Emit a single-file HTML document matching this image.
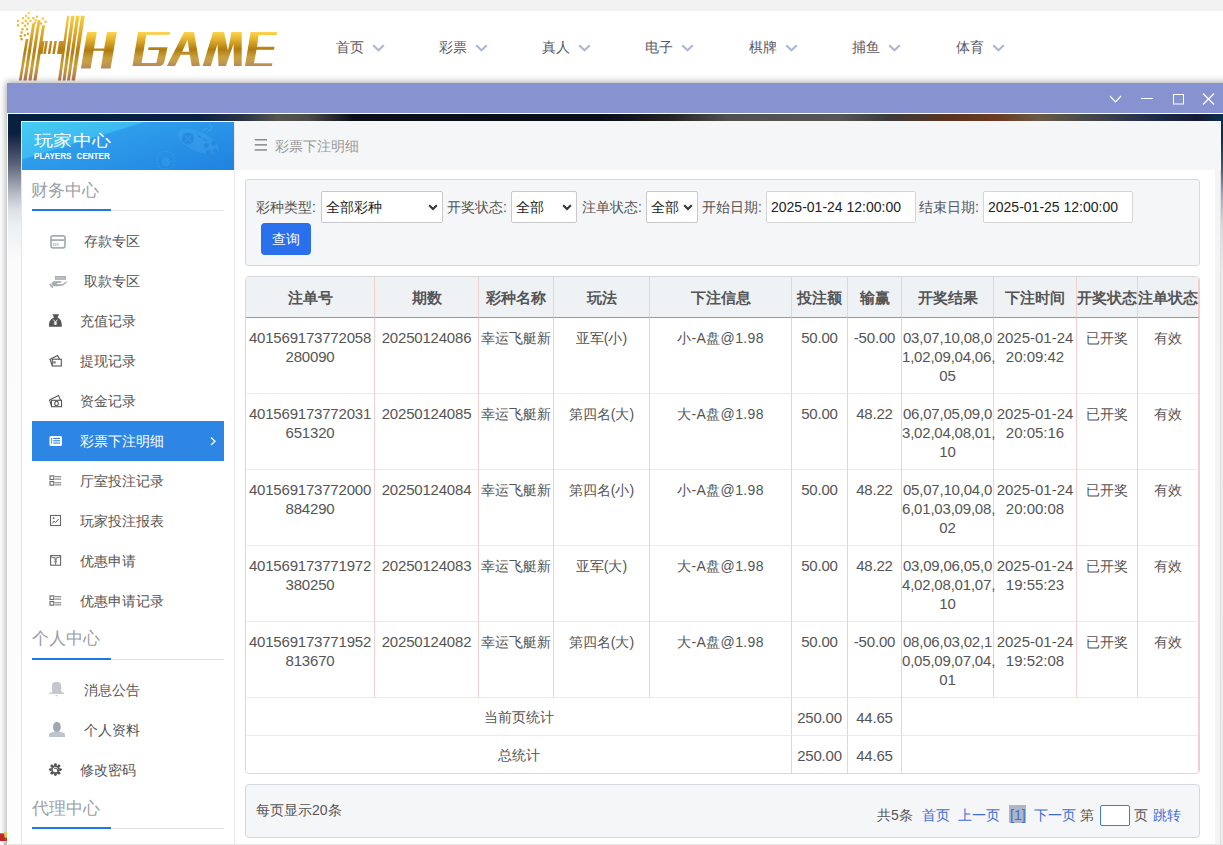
<!DOCTYPE html>
<html><head><meta charset="utf-8">
<style>
*{box-sizing:border-box;margin:0;padding:0}
html,body{width:1223px;height:845px;overflow:hidden;background:#fff;font-family:"Liberation Sans",sans-serif;font-size:14px;color:#555}
.abs{position:absolute}
#topstrip{left:0;top:0;width:1223px;height:11px;background:#f2f2f2}
#logo{left:14px;top:10px}
.nav{top:38px;font-size:14px;color:#5a5a66;height:18px;line-height:18px;white-space:nowrap}
.nav svg{position:absolute;top:6px}
#shadow{left:7px;top:83px;width:1230px;height:800px;box-shadow:0 0 7px 1px rgba(0,0,0,.35)}
#titlebar{left:7px;top:83px;width:1216px;height:30px;background:#8792d0}
#tbline{left:7px;top:113px;width:1216px;height:1px;background:#fff}
#dlgbg{left:7px;top:114px;width:1216px;height:731px;background:#f7f7f8;border-left:1px solid #fff}
#bgtop{left:8px;top:114px;width:1215px;height:8px;background:linear-gradient(90deg,#03203f 0,#0a2242 190px,#2a3345 235px,#55554f 270px,#4a4a48 300px,#0a0f18 345px,#070c16 590px,#222 660px,#505050 720px,#565656 830px,#3b3b3b 880px,#5a3420 940px,#6a3c22 990px,#6a5a45 1030px,#4a4a4a 1075px,#1e2a48 1150px,#161a34 1190px,#0a3050 1215px)}
#bgleft{left:8px;top:114px;width:13px;height:731px;background:linear-gradient(180deg,#06203f 0,#0c2042 20px,#2a3552 30px,#5a6278 50px,#8a90a0 65px,#b8bcc6 80px,#dcdfe4 95px,#eceef2 110px,#f4f5f7 130px,#fbfbfb 145px,#fdfdfd 731px)}
#bgright{left:1221px;top:114px;width:2px;height:731px;background:linear-gradient(180deg,#063050 0,#0e2d50 25px,#4a5a70 55px,#a0a4b0 80px,#d8d8dc 110px,#ececec 160px,#eeeeee 731px)}
#sidebar{left:21px;top:121px;width:214px;height:724px;background:#fff;border-left:1px solid #e6e6e6;border-right:1px solid #e6e8ec}
#sbhead{left:22px;top:122px;width:212px;height:48px;background:linear-gradient(163deg,#46cdf3 0%,#3cb9f0 32.5%,#2f9deb 34%,#2993e7 60%,#1f82e0 100%)}
.sectitle{left:32px;font-size:17px;color:#9aa0a6;white-space:nowrap;line-height:20px}
.secline{left:32px;width:192px;height:1px;background:#e2e4e8}
.secblue{left:32px;width:79px;height:2px;background:#1f7ae0}
.item{left:32px;width:192px;height:40px;line-height:40px;white-space:nowrap;color:#555;font-size:14px}
.item .ic{position:absolute;left:17px;top:0}
.item .tx{position:absolute;left:48px;top:0}
.item.active{background:#2d86e3;color:#fff}
#content{left:235px;top:121px;width:986px;height:724px;background:#fff}
#crumb{left:235px;top:121px;width:986px;height:49px;background:#f5f6f8}
#scroll{left:1215px;top:170px;width:6px;height:675px;background:#f4f4f4;border-right:1px solid #dedede}
#filter{left:245px;top:179px;width:955px;height:87px;background:#f5f6f8;border:1px solid #d6dadf;border-radius:3px}
.lbl{top:199px;font-size:14px;color:#555;white-space:nowrap;line-height:16px}
.sel{top:191px;height:32px;background:#fff;border:1px solid #c9c9c9;border-radius:2px;font-size:14px;color:#222;line-height:30px;padding-left:4px;white-space:nowrap}
.sel svg{position:absolute;right:4px;top:12px}
.inp{top:191px;width:150px;height:32px;background:#fff;border:1px solid #d5d5d5;border-radius:2px;font-size:14px;color:#222;line-height:30px;padding-left:4px;white-space:nowrap}
#btn{left:261px;top:223px;width:50px;height:32px;background:#2a70ec;border-radius:4px;color:#fff;text-align:center;line-height:32px;font-size:14px}
#tablebox{left:245px;top:276px;width:955px;height:498px;border:1px solid #d6dadf;border-radius:4px;overflow:hidden;background:#fff}
table{border-collapse:separate;border-spacing:0;table-layout:fixed;width:953px;position:absolute;left:0;top:0}
th{height:41px;background:#eff2f5;font-weight:bold;color:#555;font-size:15px;border-right:1px solid #f3d0d0;border-bottom:1px solid #9e9595;white-space:nowrap;overflow:visible;padding:2px 0 0 0}
td{height:76px;vertical-align:top;text-align:center;color:#555;font-size:14px;line-height:19px;border-right:1px solid #f3d0d0;border-bottom:1px solid #ebebeb;padding:11px 0 0 0;white-space:nowrap}
td.n{font-size:15px;letter-spacing:-.2px;padding-top:10px}
td.d{letter-spacing:0}
td.bi{letter-spacing:.35px}
tr.sum td{height:38px;vertical-align:middle;padding:2px 0 0 0}
tr.last td{height:37px;border-bottom:none}

#pager{left:245px;top:784px;width:955px;height:54px;background:#f5f6f8;border:1px solid #d3d8de;border-radius:4px}
.pg{top:806px;font-size:14px;white-space:nowrap;line-height:18px;color:#555}
.pg.b{color:#3b6fd6}
</style></head><body>
<div id="topstrip" class="abs"></div>
<!-- LOGO -->
<svg id="logo" class="abs" style="left:0;top:0" width="290" height="90" viewBox="0 0 290 90">
<defs>
<linearGradient id="g1" x1="0" y1="14" x2="0" y2="81" gradientUnits="userSpaceOnUse">
<stop offset="0" stop-color="#fbd449"/><stop offset=".3" stop-color="#dba72a"/><stop offset=".55" stop-color="#b37e12"/><stop offset=".78" stop-color="#c8a23c"/><stop offset="1" stop-color="#b27452"/>
</linearGradient>
<linearGradient id="g2" x1="0" y1="32" x2="0" y2="67" gradientUnits="userSpaceOnUse">
<stop offset="0" stop-color="#fdd54c"/><stop offset=".2" stop-color="#e6b432"/><stop offset=".5" stop-color="#b07c10"/><stop offset=".72" stop-color="#c7a13e"/><stop offset=".84" stop-color="#c39c4c"/><stop offset="1" stop-color="#b8825c"/>
</linearGradient>
<linearGradient id="g3" x1="0" y1="32" x2="0" y2="69" gradientUnits="userSpaceOnUse">
<stop offset="0" stop-color="#fdd54c"/><stop offset=".2" stop-color="#e6b432"/><stop offset=".5" stop-color="#b07c10"/><stop offset=".72" stop-color="#c7a13e"/><stop offset=".84" stop-color="#c39c4c"/><stop offset="1" stop-color="#b8825c"/>
</linearGradient>
</defs>
<g fill="url(#g1)">
<polygon points="18.9,80.6 21.6,80.6 28.4,39 25.7,39"/>
<polygon points="23.4,80.6 26.6,80.6 35.1,23.5 32.2,23.5"/>
<polygon points="28.4,80.6 31.5,80.6 40.5,19.9 37.6,19.9"/>
<polygon points="33.3,80.6 36.5,80.6 45,25.3 42.1,25.3"/>
<polygon points="58,80.6 61,80.6 69.3,15.8 67.1,15.8"/>
<polygon points="62.6,80.6 65.5,80.6 74.6,15.8 71.1,15.8"/>
<polygon points="67,80.6 69.9,80.6 79.5,15.8 76,15.8"/>
<polygon points="71.5,80.6 75,80.6 84.8,15.8 80.9,15.8"/>
<polygon points="38.2,54 42.5,54 44.6,41 40.3,41"/>
<polygon points="43.3,54 45.8,54 47.9,41 45.4,41"/>
<polygon points="47.8,54 50.3,54 52.4,41 49.9,41"/>
<polygon points="52.3,54 54.8,54 56.9,41 54.4,41"/>
<polygon points="57,54 62.5,54 64.6,41 59.1,41"/>
<g transform="translate(-1.1,-1.1)">
<rect x="28.8" y="13.1" width="2.2" height="2.2"/><rect x="26.1" y="15.8" width="2.2" height="2.2"/><rect x="23" y="18.1" width="2.2" height="2.2"/><rect x="28.4" y="18.1" width="2.2" height="2.2"/><rect x="33.3" y="18.1" width="2.2" height="2.2"/><rect x="36.9" y="16.7" width="2.2" height="2.2"/><rect x="42.8" y="18.5" width="2.2" height="2.2"/><rect x="18" y="20.8" width="2.2" height="2.2"/><rect x="25.7" y="20.8" width="2.2" height="2.2"/><rect x="30.6" y="20.8" width="2.2" height="2.2"/><rect x="35.6" y="20.3" width="2.2" height="2.2"/><rect x="45.5" y="21.7" width="2.2" height="2.2"/><rect x="22.5" y="23" width="2.2" height="2.2"/><rect x="27.9" y="23.5" width="2.2" height="2.2"/><rect x="34.7" y="23" width="2.2" height="2.2"/><rect x="41" y="23.5" width="2.2" height="2.2"/><rect x="18" y="25.3" width="2.2" height="2.2"/><rect x="25.2" y="25.7" width="2.2" height="2.2"/><rect x="22.5" y="29.3" width="2.2" height="2.2"/><rect x="27" y="29.3" width="2.2" height="2.2"/><rect x="21.6" y="32.5" width="2.2" height="2.2"/><rect x="27.9" y="33.8" width="2.2" height="2.2"/><rect x="24.8" y="35.2" width="2.2" height="2.2"/><rect x="20.7" y="36.1" width="2.2" height="2.2"/><rect x="21.6" y="39.2" width="2.2" height="2.2"/>
</g>
</g>
<g fill="url(#g3)">
<polygon points="80.9,68.6 90.6,68.6 96.8,32 87.1,32"/>
<polygon points="100.8,68.6 110.6,68.6 116.8,32 107,32"/>
<polygon points="87,50.8 104.5,50.8 104.9,48.6 87.4,48.6"/>
</g>
<g fill="url(#g2)">
<path d="M132.5,66 L159,66 Q163.5,66 164.6,61 L167.5,47.2 L148.6,47.2 L148.1,49.9 L159.2,49.9 L156.4,63 L141.6,63 L146.3,34.8 L169.6,34.8 L170.1,31.9 L138.1,31.9 Z"/>
<path d="M166.9,66 L184.2,32 L194,32 L199.9,66 L191.7,66 L189.8,54.8 L180.7,54.8 L175,66 Z M182.2,51.8 L187.5,39.7 L189.3,51.8 Z" fill-rule="evenodd"/>
<polygon points="202.7,66 210.8,66 217.5,44 218.5,66 225.9,66 233.5,44 234,66 241.7,66 241.7,32 231.4,32 228,50.7 224,32 213,32"/>
<polygon points="245,66 271.9,66 272.4,63.2 254,63.2 256.5,49.7 274,49.7 274.5,46.7 257,46.7 258.6,34.9 276.6,34.9 277.1,32 250.6,32"/>
</g>
</svg>
<!-- NAV -->
<div class="abs nav" style="left:336px">首页<svg width="13" height="8" style="left:36px" viewBox="0 0 13 8"><path d="M1.2 1.2 L6.5 6.3 L11.8 1.2" fill="none" stroke="#adb5d6" stroke-width="2"/></svg></div>
<div class="abs nav" style="left:439px">彩票<svg width="13" height="8" style="left:36px" viewBox="0 0 13 8"><path d="M1.2 1.2 L6.5 6.3 L11.8 1.2" fill="none" stroke="#adb5d6" stroke-width="2"/></svg></div>
<div class="abs nav" style="left:542px">真人<svg width="13" height="8" style="left:36px" viewBox="0 0 13 8"><path d="M1.2 1.2 L6.5 6.3 L11.8 1.2" fill="none" stroke="#adb5d6" stroke-width="2"/></svg></div>
<div class="abs nav" style="left:645px">电子<svg width="13" height="8" style="left:36px" viewBox="0 0 13 8"><path d="M1.2 1.2 L6.5 6.3 L11.8 1.2" fill="none" stroke="#adb5d6" stroke-width="2"/></svg></div>
<div class="abs nav" style="left:749px">棋牌<svg width="13" height="8" style="left:36px" viewBox="0 0 13 8"><path d="M1.2 1.2 L6.5 6.3 L11.8 1.2" fill="none" stroke="#adb5d6" stroke-width="2"/></svg></div>
<div class="abs nav" style="left:852px">捕鱼<svg width="13" height="8" style="left:36px" viewBox="0 0 13 8"><path d="M1.2 1.2 L6.5 6.3 L11.8 1.2" fill="none" stroke="#adb5d6" stroke-width="2"/></svg></div>
<div class="abs nav" style="left:956px">体育<svg width="13" height="8" style="left:36px" viewBox="0 0 13 8"><path d="M1.2 1.2 L6.5 6.3 L11.8 1.2" fill="none" stroke="#adb5d6" stroke-width="2"/></svg></div>
<!-- DIALOG -->
<div id="shadow" class="abs"></div>
<div id="titlebar" class="abs"></div>
<svg class="abs" style="left:1100px;top:85px" width="123" height="28" viewBox="0 0 123 28">
<g fill="none" stroke="#fff" stroke-width="1.2">
<path d="M10 11 L15.5 16.8 L21 11"/>
<path d="M41 13.5 H53" stroke-width="1"/>
<rect x="73.5" y="9.5" width="10" height="9.5" stroke-width="1"/>
<path d="M103 8.5 L114 19.5 M114 8.5 L103 19.5"/>
</g></svg>
<div id="tbline" class="abs"></div>
<div id="dlgbg" class="abs"></div>
<div id="bgtop" class="abs"></div>
<div id="bgleft" class="abs"></div>
<div id="bgright" class="abs"></div>
<!-- SIDEBAR -->
<div id="sidebar" class="abs"></div>
<div id="sbhead" class="abs"></div>
<div class="abs" style="left:33.5px;top:128px;font-size:19px;color:#fff;line-height:22px;white-space:nowrap;transform:scale(1.02,.86);transform-origin:0 100%">玩家中心</div>
<div class="abs" style="left:33.5px;top:151px;font-size:9.4px;font-weight:bold;color:#fff;line-height:10px;white-space:nowrap;letter-spacing:0;word-spacing:3.5px;transform:scaleX(.86);transform-origin:0 0">PLAYERS CENTER</div>
<svg class="abs" style="left:150px;top:122px" width="84" height="48" viewBox="0 0 84 48">
<ellipse cx="48.4" cy="19.6" rx="22" ry="9.8" transform="rotate(25 48.4 19.6)" fill="#5ab4f0" opacity=".22"/>
<circle cx="38" cy="16.5" r="6" fill="#1c7cdc" opacity=".55"/>
<path d="M35 13.5 L41 19.5 M41 13.5 L35 19.5" stroke="#3d9ae8" stroke-width="1.6" opacity=".6"/>
<g fill="#1c7cdc" opacity=".5"><circle cx="56.5" cy="23.5" r="2.4"/><circle cx="63.5" cy="21.5" r="2.4"/><circle cx="58.5" cy="30.5" r="2.4"/><circle cx="65" cy="29" r="2.4"/></g>
<path d="M48 14 L51 15.5 M53 17 L57 19" stroke="#1c7cdc" stroke-width="1.8" opacity=".5"/>
<path d="M53 9 L56 6 L60 9 L62 5 L59 2" fill="none" stroke="#5ab4f0" stroke-width="1" opacity=".45"/>
<circle cx="16" cy="38.5" r="9" fill="none" stroke="#4aaaf0" stroke-width="1.2" stroke-dasharray="2 1.5" opacity=".35"/>
<circle cx="16" cy="40" r="4.5" fill="#4aaaf0" opacity=".25"/>
</svg>
<!-- SIDEBAR TITLES -->
<div class="abs sectitle" style="top:181px;left:31px">财务中心</div>
<div class="abs secline" style="top:210px"></div>
<div class="abs secblue" style="top:209px"></div>
<div class="abs sectitle" style="top:629px">个人中心</div>
<div class="abs secline" style="top:659px"></div>
<div class="abs secblue" style="top:658px"></div>
<div class="abs sectitle" style="top:799px">代理中心</div>
<div class="abs secline" style="top:828px"></div>
<div class="abs secblue" style="top:827px"></div>
<!-- SIDEBAR ITEMS -->
<div class="abs item" style="top:221px"><span class="tx" style="left:52px">存款专区</span></div>
<div class="abs item" style="top:261px"><span class="tx" style="left:52px">取款专区</span></div>
<div class="abs item" style="top:301px"><span class="tx">充值记录</span></div>
<div class="abs item" style="top:341px"><span class="tx">提现记录</span></div>
<div class="abs item" style="top:381px"><span class="tx">资金记录</span></div>
<div class="abs item active" style="top:421px"><span class="tx">彩票下注明细</span></div>
<div class="abs item" style="top:461px"><span class="tx">厅室投注记录</span></div>
<div class="abs item" style="top:501px"><span class="tx">玩家投注报表</span></div>
<div class="abs item" style="top:541px"><span class="tx">优惠申请</span></div>
<div class="abs item" style="top:581px"><span class="tx">优惠申请记录</span></div>
<div class="abs item" style="top:670px"><span class="tx" style="left:52px">消息公告</span></div>
<div class="abs item" style="top:710px"><span class="tx" style="left:52px">个人资料</span></div>
<div class="abs item" style="top:750px"><span class="tx">修改密码</span></div>
<svg class="abs" style="left:0;top:0" width="240" height="845" viewBox="0 0 240 845">
<!-- card -->
<g fill="none" stroke="#a4aeb6" stroke-width="1.7"><rect x="51" y="235.8" width="14" height="12" rx="2"/></g>
<rect x="51" y="239.2" width="14" height="1.8" fill="#a4aeb6"/>
<g fill="#a4aeb6"><rect x="53.4" y="243" width=".9" height="3"/><rect x="55.4" y="243" width=".9" height="3"/><rect x="57.4" y="243" width=".9" height="3"/></g>
<!-- hand -->
<rect x="55.5" y="276.4" width="10" height="2.9" fill="#bac2c8" stroke="#9ea8b0" stroke-width=".9"/>
<path d="M49.6 284.6 L50.6 284 L53 287 L52 287.7 Z" fill="#a4aeb6" stroke="#a4aeb6" stroke-width=".8"/>
<path d="M51.3 283.4 L53.4 281.3 L61.6 281.1 L61 282.6 L57 283.3 L57.3 284.3 L62.6 284 L66.4 281.2 L67 282.3 L63.2 285.6 L58 286.2 L54 286.3 L52.6 285.8 Z" fill="#a4aeb6"/>
<!-- money bag -->
<path d="M52.5 314.2 L59 314.2 L57.6 317.4 C61 319 62 322 61.8 326.7 L49 326.7 C48.8 322 50 319 54 317.4 Z" fill="#555"/>
<path d="M53.4 319.6 L55.4 322.2 L57.4 319.6 M55.4 322 V325 M53.8 322.8 H57 M53.8 324 H57" fill="none" stroke="#fff" stroke-width=".9"/>
<!-- wallet -->
<g fill="none" stroke="#555" stroke-width="1.1">
<rect x="52.3" y="359.2" width="9" height="6.8"/>
<path d="M49.6 359.4 L57.6 355.4 L59.6 359.2"/>
<path d="M50 359.4 L52.3 365.5"/>
</g>
<rect x="53.3" y="361.3" width="2.4" height="2.2" fill="#777"/>
<!-- cash -->
<g fill="none" stroke="#555" stroke-width="1.1">
<rect x="51.5" y="400.3" width="10" height="6.4"/>
<path d="M49.5 400 L58.5 395.4 L60.6 400.2"/>
<path d="M49.6 400 L51.5 406"/>
<ellipse cx="56.5" cy="403.5" rx="1.8" ry="2.2"/>
</g>
<!-- active list icon -->
<rect x="49.5" y="436" width="12.5" height="10" rx="1.6" fill="#fff"/>
<g fill="#2d86e3"><rect x="53.2" y="437.9" width="6.8" height="1.1"/><rect x="53.2" y="440.2" width="6.8" height="1.1"/><rect x="53.2" y="442.5" width="6.8" height="1.1"/><rect x="51.2" y="437.9" width=".9" height="5.7"/></g>
<path d="M211 437.5 L215 441.2 L211 445" fill="none" stroke="#fff" stroke-width="1.3"/>
<!-- list icons -->
<g fill="none" stroke="#666" stroke-width="1.1">
<rect x="50" y="475.9" width="3.8" height="3.6"/><rect x="50" y="481.6" width="3.8" height="3.6"/>
<rect x="50" y="595.9" width="3.8" height="3.6"/><rect x="50" y="601.6" width="3.8" height="3.6"/>
</g>
<g fill="#777">
<rect x="55" y="476.2" width="6.2" height="1"/><rect x="55" y="478.6" width="6.2" height="1"/><rect x="55" y="482.3" width="6.2" height="1"/><rect x="55" y="484.4" width="6.2" height="1"/>
<rect x="55" y="596.2" width="6.2" height="1"/><rect x="55" y="598.6" width="6.2" height="1"/><rect x="55" y="602.3" width="6.2" height="1"/><rect x="55" y="604.4" width="6.2" height="1"/>
</g>
<!-- chart -->
<rect x="50.5" y="515.5" width="10" height="10" fill="none" stroke="#666" stroke-width="1.1"/>
<path d="M52.4 523.5 L54 521 L55.6 522.5 L58.6 519" fill="none" stroke="#666" stroke-width="1"/>
<circle cx="53.6" cy="518.2" r=".9" fill="#666"/>
<!-- gift -->
<rect x="50.6" y="555.6" width="10" height="9.6" fill="none" stroke="#666" stroke-width="1.1"/>
<path d="M50.8 556.5 C53 558.5 58 558.5 60.4 556.5" fill="none" stroke="#666" stroke-width="1"/>
<path d="M54.2 559.2 H57 M55.6 559.2 V564.8" fill="none" stroke="#777" stroke-width="1"/>
<ellipse cx="55.6" cy="561.5" rx="1.3" ry="1.8" fill="#888"/>
<!-- bell -->
<path d="M52 693.8 V685.5 C52 683 54 681.8 56.6 681.8 C59.2 681.8 61.2 683 61.2 685.5 V691.6 L64 693.8 Z" fill="#c2c8ce"/>
<rect x="49.2" y="692.5" width="14.8" height="1.3" fill="#c2c8ce"/>
<rect x="55.6" y="695" width="2" height="1.2" fill="#c2c8ce"/>
<!-- person -->
<ellipse cx="56.9" cy="727" rx="3.9" ry="5.2" fill="#9ea8b2"/>
<path d="M49 737 V734.5 C49 733.2 51 732.2 54 731.8 L60 731.8 C63 732.2 65 733.2 65 734.5 V737 Z" fill="#bcc4cc"/>
<!-- gear -->
<g transform="translate(55.4,769.6)">
<g fill="#555"><circle cx="0.00" cy="-5.00" r="1.45"/><circle cx="3.54" cy="-3.54" r="1.45"/><circle cx="5.00" cy="-0.00" r="1.45"/><circle cx="3.54" cy="3.54" r="1.45"/><circle cx="0.00" cy="5.00" r="1.45"/><circle cx="-3.54" cy="3.54" r="1.45"/><circle cx="-5.00" cy="0.00" r="1.45"/><circle cx="-3.54" cy="-3.54" r="1.45"/></g>
<circle r="3.5" fill="none" stroke="#555" stroke-width="1.6"/>
<path d="M-1.2 -0.6 A1.6 1.6 0 1 1 1.8 1.8" fill="none" stroke="#666" stroke-width="1.1"/>
</g>
</svg>
<!-- CONTENT -->
<div id="content" class="abs"></div><div id="crumb" class="abs"></div><div id="scroll" class="abs"></div>
<svg class="abs" style="left:254px;top:138px" width="14" height="14" viewBox="0 0 14 14"><g fill="#8a8a8a"><rect x=".7" y="1" width="12.3" height="1.5"/><rect x=".7" y="6.1" width="12.3" height="1.5"/><rect x=".7" y="11.2" width="12.3" height="1.5"/></g></svg>
<div class="abs" style="left:275px;top:137px;font-size:14px;color:#999;line-height:18px;white-space:nowrap">彩票下注明细</div>
<div id="filter" class="abs"></div>
<div class="abs lbl" style="left:256px">彩种类型:</div>
<div class="abs sel" style="left:321px;width:122px">全部彩种<svg width="10" height="7" viewBox="0 0 10 7"><path d="M1.2 1.2 L5 5 L8.8 1.2" fill="none" stroke="#333" stroke-width="2"/></svg></div>
<div class="abs lbl" style="left:447px">开奖状态:</div>
<div class="abs sel" style="left:511px;width:66px">全部<svg width="10" height="7" viewBox="0 0 10 7"><path d="M1.2 1.2 L5 5 L8.8 1.2" fill="none" stroke="#333" stroke-width="2"/></svg></div>
<div class="abs lbl" style="left:582px">注单状态:</div>
<div class="abs sel" style="left:646px;width:52px">全部<svg width="10" height="7" viewBox="0 0 10 7"><path d="M1.2 1.2 L5 5 L8.8 1.2" fill="none" stroke="#333" stroke-width="2"/></svg></div>
<div class="abs lbl" style="left:702px">开始日期:</div>
<div class="abs inp" style="left:766px">2025-01-24 12:00:00</div>
<div class="abs lbl" style="left:919px">结束日期:</div>
<div class="abs inp" style="left:983px">2025-01-25 12:00:00</div>
<div id="btn" class="abs">查询</div>
<div id="tablebox" class="abs"><table><colgroup><col style="width:129px"><col style="width:104px"><col style="width:75px"><col style="width:96px"><col style="width:142px"><col style="width:56px"><col style="width:54px"><col style="width:92px"><col style="width:83px"><col style="width:61px"><col style="width:61px"></colgroup>
<tr><th>注单号</th><th>期数</th><th>彩种名称</th><th>玩法</th><th>下注信息</th><th>投注额</th><th>输赢</th><th>开奖结果</th><th>下注时间</th><th>开奖状态</th><th>注单状态</th></tr>
<tr><td class="n">401569173772058<br>280090</td><td class="n">20250124086</td><td>幸运飞艇新</td><td>亚军(小)</td><td class="bi">小-A盘@1.98</td><td class="n">50.00</td><td class="n">-50.00</td><td class="n">03,07,10,08,0<br>1,02,09,04,06,<br>05</td><td class="n d">2025-01-24<br>20:09:42</td><td>已开奖</td><td>有效</td></tr>
<tr><td class="n">401569173772031<br>651320</td><td class="n">20250124085</td><td>幸运飞艇新</td><td>第四名(大)</td><td class="bi">大-A盘@1.98</td><td class="n">50.00</td><td class="n">48.22</td><td class="n">06,07,05,09,0<br>3,02,04,08,01,<br>10</td><td class="n d">2025-01-24<br>20:05:16</td><td>已开奖</td><td>有效</td></tr>
<tr><td class="n">401569173772000<br>884290</td><td class="n">20250124084</td><td>幸运飞艇新</td><td>第四名(小)</td><td class="bi">小-A盘@1.98</td><td class="n">50.00</td><td class="n">48.22</td><td class="n">05,07,10,04,0<br>6,01,03,09,08,<br>02</td><td class="n d">2025-01-24<br>20:00:08</td><td>已开奖</td><td>有效</td></tr>
<tr><td class="n">401569173771972<br>380250</td><td class="n">20250124083</td><td>幸运飞艇新</td><td>亚军(大)</td><td class="bi">大-A盘@1.98</td><td class="n">50.00</td><td class="n">48.22</td><td class="n">03,09,06,05,0<br>4,02,08,01,07,<br>10</td><td class="n d">2025-01-24<br>19:55:23</td><td>已开奖</td><td>有效</td></tr>
<tr><td class="n">401569173771952<br>813670</td><td class="n">20250124082</td><td>幸运飞艇新</td><td>第四名(大)</td><td class="bi">大-A盘@1.98</td><td class="n">50.00</td><td class="n">-50.00</td><td class="n">08,06,03,02,1<br>0,05,09,07,04,<br>01</td><td class="n d">2025-01-24<br>19:52:08</td><td>已开奖</td><td>有效</td></tr>
<tr class="sum"><td colspan="5">当前页统计</td><td class="n">250.00</td><td class="n">44.65</td><td colspan="4"></td></tr>
<tr class="sum last"><td colspan="5">总统计</td><td class="n">250.00</td><td class="n">44.65</td><td colspan="4"></td></tr>
</table></div>
<div id="pager" class="abs"></div>
<div class="abs pg" style="left:256px;top:801px">每页显示20条</div>
<div class="abs pg" style="left:877px">共5条</div>
<div class="abs pg b" style="left:922px">首页</div>
<div class="abs pg b" style="left:958px">上一页</div>
<div class="abs" style="left:1009px;top:805px;width:17px;height:18px;background:#b2b4c8"></div>
<div class="abs pg b" style="left:1010px">[1]</div>
<div class="abs pg b" style="left:1034px">下一页</div>
<div class="abs pg" style="left:1080px">第</div>
<div class="abs" style="left:1100px;top:805px;width:30px;height:21px;background:#fff;border:1px solid #3d7be0;border-radius:2px"></div>
<div class="abs pg" style="left:1134px">页</div>
<div class="abs pg b" style="left:1153px">跳转</div>
<div class="abs" style="left:8px;top:844px;width:1215px;height:1px;background:#e6e6e6"></div>
<svg class="abs" style="left:0;top:830px" width="8" height="15" viewBox="0 0 8 15"><path d="M0 3.3 L4 3.5 L5.5 5 L5.5 11 L0 11 Z" fill="#c0262a"/><path d="M4 2.2 L7 2 L7 8 L5 8.5 L4.2 6 Z" fill="#d8c850" opacity=".9"/><path d="M4.5 8 L7 7.5 L7 11 L5 11.2 Z" fill="#a84a20"/><path d="M4 12.5 L7 12.5 L7 15 L4 15 Z" fill="#c8a090" opacity=".6"/></svg>
</body></html>
